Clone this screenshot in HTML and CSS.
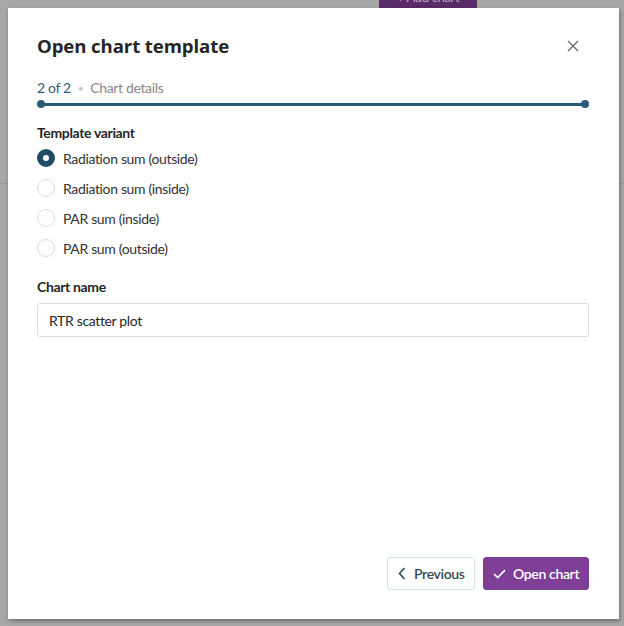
FILE: index.html
```html
<!DOCTYPE html>
<html lang="en">
<head>
<meta charset="utf-8">
<title>Open chart template</title>
<link rel="stylesheet" href="styles.css">
</head>
<body>
<div class="backdrop">
  <div class="bg-button">+ Add chart</div>
  <div class="bg-line"></div>
</div>
<div class="modal">
  <div class="header">
    <h1 class="title">Open chart template</h1>
    <button class="close" aria-label="Close">
      <svg width="12" height="12" viewBox="0 0 12 12"><path d="M1 1L11 11M11 1L1 11" stroke="#6b6b6b" stroke-width="1.4" fill="none"/></svg>
    </button>
  </div>
  <div class="steps">
    <span class="step-count">2 of 2</span>
    <span class="step-dot">•</span>
    <span class="step-name">Chart details</span>
  </div>
  <div class="progress"><span class="pdot"></span><span class="pline"></span><span class="pdot"></span></div>

  <div class="field-label first">Template variant</div>
  <div class="radios">
    <label class="radio"><span class="circle checked"></span>Radiation sum (outside)</label>
    <label class="radio"><span class="circle"></span>Radiation sum (inside)</label>
    <label class="radio"><span class="circle"></span>PAR sum (inside)</label>
    <label class="radio"><span class="circle"></span>PAR sum (outside)</label>
  </div>

  <div class="field-label second">Chart name</div>
  <div class="input">RTR scatter plot</div>

  <div class="spacer"></div>
  <div class="footer">
    <button class="btn btn-secondary">
      <svg width="8" height="13" viewBox="0 0 8 13"><path d="M6.5 1L1.5 6.5L6.5 12" stroke="#2f4a5c" stroke-width="1.6" fill="none"/></svg>
      Previous
    </button>
    <button class="btn btn-primary">
      <svg width="13" height="10" viewBox="0 0 13 10"><path d="M1 5L4.7 8.6L12 1.2" stroke="#fff" stroke-width="1.7" fill="none"/></svg>
      Open chart
    </button>
  </div>
</div>
</body>
</html>
```
FILE: styles.css
```css
* { box-sizing: border-box; }
html, body { margin: 0; padding: 0; }
body {
  width: 624px;
  height: 626px;
  background: #a7a7a7;
  font-family: Lato, "Noto Sans", sans-serif;
  letter-spacing: -0.35px;
  position: relative;
  overflow: hidden;
}
.backdrop { position: absolute; inset: 0; }
.bg-button {
  position: absolute;
  left: 379px;
  top: -14px;
  width: 98px;
  height: 22px;
  background: #5a2a69;
  color: #b9a6c0;
  font-size: 13px;
  text-align: center;
  line-height: 22px;
}
.bg-line {
  position: absolute;
  left: 0;
  top: 183px;
  width: 624px;
  height: 1px;
  background: #999;
}
.modal {
  position: absolute;
  left: 8px;
  top: 8px;
  width: 611px;
  height: 611px;
  background: #fff;
  box-shadow: 1px 2px 4px rgba(0,0,0,0.35);
  padding: 24px 30px 29px 29px;
  display: flex;
  flex-direction: column;
}
.header {
  display: flex;
  align-items: center;
  justify-content: space-between;
  height: 28px;
}
.title {
  margin: 0;
  font-family: "Open Sans", "Noto Sans", sans-serif;
  font-weight: 700;
  font-size: 18.6px;
  letter-spacing: -0.1px;
  line-height: 28px;
  color: #262626;
}
.close {
  border: 0;
  background: none;
  padding: 0;
  width: 24px;
  height: 24px;
  display: flex;
  align-items: center;
  justify-content: center;
  margin-right: 4px;
}
.steps {
  margin-top: 18px;
  font-size: 14px;
  line-height: 20px;
  display: flex;
  align-items: center;
  gap: 7px;
}
.step-count { color: #2b5a77; }
.step-dot { color: #c4c4c4; font-size: 10px; }
.step-name { color: #8a8a8a; }
.progress {
  margin-top: 2px;
  height: 8px;
  display: flex;
  align-items: center;
}
.pdot {
  width: 8px;
  height: 8px;
  border-radius: 50%;
  background: #2a5b76;
  flex: none;
}
.pline {
  flex: 1;
  height: 3px;
  background: #2a5b76;
  margin: 0 -1px;
}
.field-label {
  font-size: 14px;
  line-height: 20px;
  font-weight: 700;
  color: #262626;
}
.field-label.first { margin-top: 15px; }
.field-label.second { margin-top: 14px; }
.radios { display: flex; flex-direction: column; }
.radio {
  height: 30px;
  display: flex;
  align-items: center;
  gap: 8px;
  font-size: 14px;
  color: #333;
}
.circle {
  width: 18px;
  height: 18px;
  border-radius: 50%;
  border: 1px solid #dcdcdc;
  background: #fff;
  flex: none;
}
.circle.checked {
  border: 6px solid #1f4d66;
  background: #fff;
}
.input {
  margin-top: 6px;
  height: 34px;
  border: 1px solid #dcdcdc;
  border-radius: 3px;
  padding: 0 11px;
  display: flex;
  align-items: center;
  font-size: 14px;
  color: #262626;
}
.spacer { flex: 1; }
.footer {
  display: flex;
  justify-content: flex-end;
  gap: 8px;
}
.btn {
  height: 33px;
  border-radius: 3px;
  font-family: Lato, "Noto Sans", sans-serif;
  font-size: 14px;
  letter-spacing: -0.35px;
  display: flex;
  align-items: center;
  gap: 8px;
  cursor: pointer;
}
.btn-secondary {
  width: 88px;
  background: #fff;
  border: 1px solid #cfe4ef;
  color: #2f4a5c;
  padding: 0 0 0 10px;
  font-weight: 600;
}
.btn-primary {
  width: 106px;
  background: #7f3f97;
  border: 1px solid #7f3f97;
  color: #fff;
  padding: 0 0 0 9px;
  gap: 7px;
  font-weight: 600;
}
```
